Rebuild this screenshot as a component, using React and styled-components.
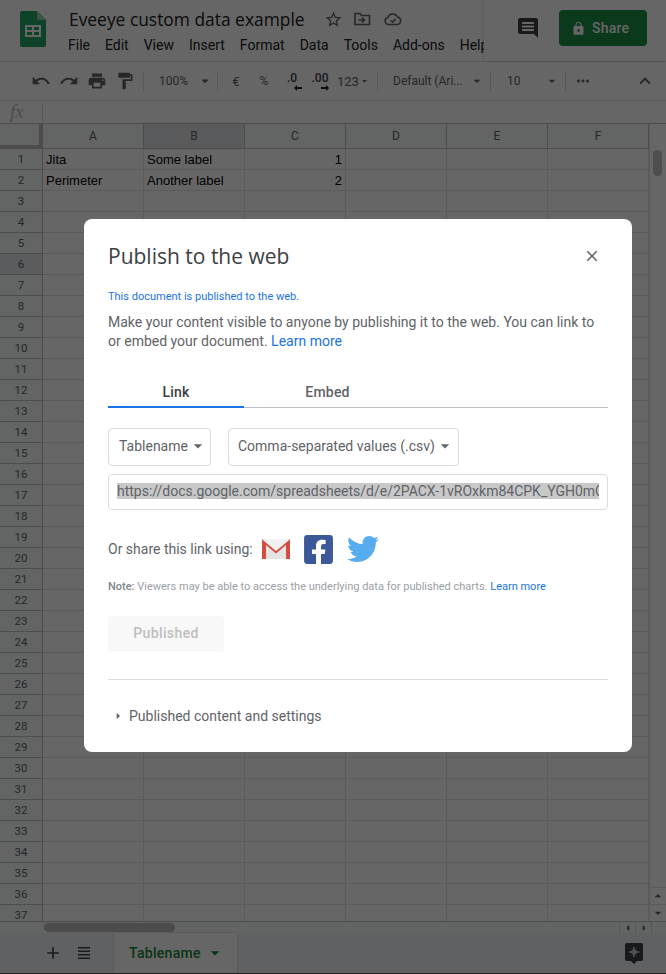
import styled, { createGlobalStyle } from 'styled-components'
import {
  MdUndo, MdRedo, MdPrint, MdFormatPaint, MdStarBorder, MdLock, MdMoreHoriz,
  MdExpandLess, MdAdd, MdClose, MdArrowDropDown, MdArrowRight,
} from 'react-icons/md'
import { FaFacebookSquare, FaTwitter } from 'react-icons/fa'

const GlobalStyle = createGlobalStyle`
  html, body { margin: 0; padding: 0; height: 100%; overflow: hidden; background: #fff; }
  * { box-sizing: border-box; }
`

const Page = styled.div`
  position: relative;
  width: 666px;
  height: 974px;
  display: flex;
  flex-direction: column;
  overflow: hidden;
  font-family: Roboto, "Liberation Sans", sans-serif;
  color: #3c4043;
`

const Header = styled.header`
  height: 62px;
  flex: none;
  display: flex;
  border-bottom: 1px solid #dadce0;
`

const Logo = styled.div`
  width: 69px;
  flex: none;
  padding: 11px 0 0 20px;
`

const TitleBlock = styled.div`
  width: 415px;
  flex: none;
  overflow: hidden;
  padding-top: 6px;
`

const DocTitleRow = styled.div`
  display: flex;
  align-items: center;
  height: 26px;
  white-space: nowrap;
`

const DocTitle = styled.div`
  font-family: "Open Sans", sans-serif;
  font-size: 17.4px;
  color: #202124;
  width: 255px;
`

const DocIcons = styled.div`
  display: flex;
  align-items: center;
  gap: 10px;
  color: #5f6368;
`

const MenuBar = styled.nav`
  display: flex;
  margin-top: 4px;
  margin-left: -1px;
  white-space: nowrap;
`

const MenuItem = styled.span`
  font-size: 14px;
  line-height: 18px;
  margin-right: 15px;
  color: #202124;
`

const HeaderRight = styled.div`
  flex: 1;
  display: flex;
  align-items: center;
  padding: 0 19px 5px 34px;
  box-shadow: -1px 0 2px rgba(0, 0, 0, 0.12);
`

const CommentWrap = styled.div`
  display: flex;
  margin-right: 21px;
`

const ShareButton = styled.div`
  width: 88px;
  height: 36px;
  background: #198f47;
  border-radius: 4px;
  color: #fff;
  font-size: 14px;
  font-weight: 500;
  display: flex;
  align-items: center;
  padding-left: 12px;
  gap: 6px;
  letter-spacing: 0.25px;
`

const Toolbar = styled.div`
  height: 39px;
  flex: none;
  display: flex;
  align-items: center;
  padding: 0 10px 0 27px;
  border-bottom: 1px solid #dadce0;
  background: #fff;
  color: #444746;
`

const ToolButton = styled.div`
  width: ${p => p.$w || 28}px;
  height: 24px;
  flex: none;
  display: flex;
  align-items: center;
  justify-content: ${p => p.$between ? 'space-between' : 'center'};
  padding: 0 ${p => p.$pr || 0}px 0 ${p => p.$pl || 0}px;
  margin-left: ${p => p.$end ? 'auto' : '0'};
  font-size: ${p => p.$size || 13}px;
  white-space: nowrap;
  color: #5f6368;
`

const ToolSep = styled.div`
  width: 1px;
  height: 20px;
  background: #dadce0;
  flex: none;
  margin: ${p => p.$m || '0 8px'};
`

const Decimal = styled.span`
  position: relative;
  font-size: 12px;
  font-weight: 500;
  color: #3c4043;
  padding-bottom: 6px;
`

const DecimalArrow = styled.svg`
  position: absolute;
  right: ${p => p.$right}px;
  bottom: 0;
`

const FormulaBar = styled.div`
  height: 23px;
  flex: none;
  display: flex;
  align-items: center;
  border-bottom: 1px solid #c0c0c0;
`

const FxLabel = styled.div`
  width: 42px;
  padding-left: 10px;
  font-family: "Liberation Serif", serif;
  font-style: italic;
  font-size: 19px;
  color: #bdbdbd;
`

const FxSep = styled.div`
  width: 1px;
  height: 17px;
  background: #dadce0;
`

const Sheet = styled.div`
  flex: 1;
  min-height: 0;
  display: flex;
`

const GridArea = styled.div`
  width: 649px;
  flex: none;
  overflow: hidden;
`

const Row = styled.div`
  display: grid;
  grid-template-columns: 43px repeat(6, 101px);
  height: ${p => p.$h || 21}px;
`

const Corner = styled.div`
  background: #f8f9fa;
  border-right: 4px solid #bdbdbd;
  border-bottom: 4px solid #bdbdbd;
`

const ColHead = styled.div`
  background: ${p => p.$active ? '#e0e3e8' : '#f8f9fa'};
  border-right: 1px solid #c0c0c0;
  border-bottom: 1px solid #c0c0c0;
  font-size: 12px;
  color: #5f6368;
  display: flex;
  align-items: center;
  justify-content: center;
`

const RowHead = styled.div`
  background: ${p => p.$active ? '#e4e7ea' : '#f8f9fa'};
  border-right: 1px solid #c0c0c0;
  border-bottom: 1px solid #c0c0c0;
  font-size: 11.500px;
  color: #5f6368;
  display: flex;
  align-items: center;
  justify-content: center;
`

const Cell = styled.div`
  border-right: 1px solid #e2e3e3;
  border-bottom: 1px solid #e2e3e3;
  font-family: "Liberation Sans", sans-serif;
  font-size: 13px;
  color: #000;
  padding: 0 3px;
  display: flex;
  align-items: center;
  justify-content: ${p => p.$num ? 'flex-end' : 'flex-start'};
  white-space: nowrap;
`

const VScroll = styled.div`
  flex: 1;
  position: relative;
  background: #fff;
  border-left: 1px solid #e2e3e3;
`

const VThumb = styled.div`
  position: absolute;
  left: 3px;
  top: 26px;
  width: 9px;
  height: 26px;
  border-radius: 5px;
  background: #c4c4c4;
`

const ScrollArrows = styled.div`
  position: absolute;
  left: 0;
  right: 0;
  bottom: 0;
  display: flex;
  flex-direction: column;
`

const ScrollBtn = styled.div`
  height: 17px;
  display: flex;
  align-items: center;
  justify-content: center;
  border-top: 1px solid #e2e3e3;
  color: #5f6368;
`

const Caret = styled(MdArrowDropDown)`
  transform: rotate(${p => p.$turn || 0}deg);
`

const TabCaret = styled(MdArrowDropDown)`
  margin-left: 4px;
`

const HScroll = styled.div`
  height: 12px;
  flex: none;
  display: flex;
  border-top: 1px solid #c0c0c0;
  background: #f8f9fa;
`

const HTrack = styled.div`
  width: 619px;
  flex: none;
  padding: 1px 0 0 44px;
`

const HThumb = styled.div`
  width: 131px;
  height: 9px;
  border-radius: 5px;
  background: #bdbdbd;
`

const HButton = styled.div`
  width: 16px;
  flex: none;
  display: flex;
  align-items: center;
  justify-content: center;
  border-left: 1px solid #dadce0;
  color: #5f6368;
`

const TabBar = styled.div`
  height: 40px;
  flex: none;
  display: flex;
  align-items: stretch;
  background: #f1f3f4;
  color: #5f6368;
`

const TabIcons = styled.div`
  width: 114px;
  flex: none;
  display: flex;
  align-items: center;
  padding-left: 43px;
  gap: 15px;
  color: #444746;
`

const SheetTab = styled.div`
  width: 123px;
  flex: none;
  display: flex;
  align-items: center;
  padding-left: 15px;
  background: #fff;
  box-shadow: 0 0 2px rgba(60, 64, 67, 0.3);
  color: #188038;
  font-size: 14px;
  font-weight: 500;
  letter-spacing: 0.3px;
`

const Explore = styled.div`
  margin-left: auto;
  display: flex;
  align-items: center;
  padding-right: 23px;
`

const BottomLine = styled.div`
  height: 1px;
  flex: none;
  background: #555;
`

const Backdrop = styled.div`
  position: absolute;
  inset: 0;
  background: rgba(0, 0, 0, 0.6);
  padding: 219px 0 0 84px;
`

const Dialog = styled.div`
  width: 548px;
  height: 533px;
  background: #fff;
  border-radius: 8px;
  padding: 24px 24px 0;
  display: flex;
  flex-direction: column;
`

const DialogHead = styled.div`
  display: flex;
  align-items: center;
  justify-content: space-between;
  height: 26px;
  padding-right: 7px;
  color: #5f6368;
`

const DialogTitle = styled.h2`
  margin: 0;
  font-family: "Open Sans", sans-serif;
  font-weight: 400;
  font-size: 21px;
  color: #3c4043;
`

const Status = styled.div`
  margin-top: 21px;
  font-size: 11px;
  line-height: 14px;
  color: #1a73e8;
`

const Intro = styled.p`
  margin: 9px 0 0;
  font-size: 14px;
  line-height: 19px;
  color: #5f6368;
`

const Link = styled.a`
  color: #1a73e8;
  font-size: inherit;
`

const Tabs = styled.div`
  margin-top: 27px;
  display: flex;
  height: 30px;
  border-bottom: 1px solid #bdc1c6;
`

const Tab = styled.div`
  width: ${p => p.$w}px;
  height: 30px;
  display: flex;
  justify-content: center;
  padding-top: 6px;
  font-size: 14px;
  font-weight: 500;
  letter-spacing: 0.2px;
  color: ${p => p.$active ? '#3c4043' : '#5f6368'};
  border-bottom: ${p => p.$active ? '2px solid #1a73e8' : '0'};
`

const Selects = styled.div`
  margin-top: 20px;
  display: flex;
  gap: 17px;
`

const Select = styled.div`
  height: 38px;
  width: ${p => p.$w}px;
  padding: 0 0 2px ${p => p.$pl}px;
  border: 1px solid #dadce0;
  border-radius: 4px;
  display: flex;
  align-items: center;
  font-size: 14px;
  color: #5f6368;
  white-space: nowrap;
`

const UrlBox = styled.div`
  margin-top: 8px;
  height: 36px;
  border: 1px solid #dadce0;
  border-radius: 4px;
  padding: 0 8px 2px;
  display: flex;
  align-items: center;
`

const UrlText = styled.div`
  width: 100%;
  overflow: hidden;
  white-space: nowrap;
  background: #c8c8c8;
  font-size: 14px;
  line-height: 16px;
  color: #5f6368;
`

const ShareRow = styled.div`
  margin-top: 22px;
  height: 34px;
  display: flex;
  align-items: center;
  font-size: 14px;
  color: #5f6368;
`

const ShareLabel = styled.span`
  margin-right: 8px;
`

const ShareIcon = styled.span`
  display: flex;
  margin-right: ${p => p.$gap}px;
  color: ${p => p.$color || 'inherit'};
`

const Note = styled.div`
  margin-top: 14px;
  font-size: 11px;
  line-height: 14px;
  color: #9aa0a6;
`

const NoteLabel = styled.b`
  color: #80868b;
  font-weight: 500;
`

const PublishedBtn = styled.div`
  margin-top: 22px;
  width: 116px;
  height: 36px;
  padding-bottom: 2px;
  background: #f8f8f8;
  border-radius: 4px;
  display: flex;
  align-items: center;
  justify-content: center;
  font-size: 14px;
  font-weight: 500;
  letter-spacing: 0.4px;
  color: #bdbdbd;
`

const Divider = styled.div`
  margin-top: 27px;
  height: 1px;
  background: #dadce0;
`

const Disclosure = styled.div`
  margin-top: 26px;
  display: flex;
  align-items: center;
  font-size: 14px;
  line-height: 20px;
  color: #5f6368;
`

const DisclosureIcon = styled.span`
  display: flex;
  width: 19px;
  margin-left: 2px;
`

const SheetsLogo = () => (
  <svg width="26" height="36" viewBox="0 0 26 36">
    <path d="M2 0h15l9 9v25a2 2 0 0 1-2 2H2a2 2 0 0 1-2-2V2a2 2 0 0 1 2-2z" fill="#23a566" />
    <path d="M17 0l9 9h-7a2 2 0 0 1-2-2z" fill="#8ed1b1" />
    <path d="M5 14h16v12H5zm2 2v3h5v-3zm7 0v3h5v-3zm-7 5v3h5v-3zm7 0v3h5v-3z" fill="#fff" fillRule="evenodd" />
  </svg>
)

const FolderMove = () => (
  <svg width="18" height="16" viewBox="0 0 18 16" fill="none" stroke="#5f6368" strokeWidth="1.6">
    <path d="M2 2.500h5l1.500 2h8v9H2z" />
    <path d="M5.500 9h6M9 6.500L11.500 9 9 11.500" />
  </svg>
)

const CloudDone = () => (
  <svg width="21" height="14" viewBox="-3 0 21 14" fill="none" stroke="#5f6368" strokeWidth="1.5">
    <path d="M4.500 12.500a3.600 3.600 0 0 1-.6-7.100A5.200 5.200 0 0 1 13.500 5a3.800 3.800 0 0 1 0 7.500z" />
    <path d="M6.500 8.500l2 1.600 3-3" />
  </svg>
)

const CommentIcon = () => (
  <svg width="20" height="20" viewBox="0 0 20 20">
    <path d="M2 0h16a2 2 0 0 1 2 2v18l-4-4H2a2 2 0 0 1-2-2V2a2 2 0 0 1 2-2zm2 4v2h12V4zm0 3.500v2h12v-2zM4 11v2h12v-2z" fill="#3c4043" fillRule="evenodd" />
  </svg>
)

const ExploreIcon = () => (
  <svg width="18" height="21" viewBox="0 0 18 21">
    <path d="M2 0h14a2 2 0 0 1 2 2v14a2 2 0 0 1-2 2h-4l-3 3-3-3H2a2 2 0 0 1-2-2V2a2 2 0 0 1 2-2z" fill="#3c4043" />
    <path d="M9 3l1.700 4.300L15 9l-4.300 1.700L9 15l-1.700-4.300L3 9l4.300-1.700z" fill="#c4c4c4" />
  </svg>
)

const GmailIcon = () => (
  <svg width="30" height="22" viewBox="0 0 30 22">
    <path d="M1 1h28v20H1z" fill="#f1f1f1" />
    <path d="M4 4l11 9 11-9v17h-22z" fill="#e4e4e4" />
    <path d="M3 3l12 10L27 3l2-2v20h-4V7L15 15.500 5 7v14H1V1z" fill="#d54c3f" />
  </svg>
)

const AllSheetsIcon = () => (
  <svg width="12" height="12" viewBox="0 0 12 12" fill="#444746">
    <path d="M0 0h12v1.500H0zM0 3.500h12V5H0zM0 7h12v1.500H0zM0 10.500h12V12H0z" />
  </svg>
)

const ArrowLeft = () => (
  <DecimalArrow $right={-5} width="8" height="6" viewBox="0 0 8 6" fill="#202124">
    <path d="M0 3l3-3v2h5v2H3v2z" />
  </DecimalArrow>
)

const ArrowRight = () => (
  <DecimalArrow $right={-1} width="8" height="6" viewBox="0 0 8 6" fill="#202124">
    <path d="M8 3L5 0v2H0v2h5v2z" />
  </DecimalArrow>
)

const rowNumbers = Array.from({ length: 37 }, (_, i) => i + 1)
const cellData = {
  1: ['Jita', 'Some label', '1'],
  2: ['Perimeter', 'Another label', '2'],
}
const columns = ['A', 'B', 'C', 'D', 'E', 'F']
const menus = ['File', 'Edit', 'View', 'Insert', 'Format', 'Data', 'Tools', 'Add-ons', 'Help']

const App = () => {
  return (
    <Page>
      <GlobalStyle />
      <Header>
        <Logo><SheetsLogo /></Logo>
        <TitleBlock>
          <DocTitleRow>
            <DocTitle>Eveeye custom data example</DocTitle>
            <DocIcons>
              <MdStarBorder size={19} />
              <FolderMove />
              <CloudDone />
            </DocIcons>
          </DocTitleRow>
          <MenuBar>
            {menus.map(m => <MenuItem key={m}>{m}</MenuItem>)}
          </MenuBar>
        </TitleBlock>
        <HeaderRight>
          <CommentWrap><CommentIcon /></CommentWrap>
          <ShareButton><MdLock size={15} />Share</ShareButton>
        </HeaderRight>
      </Header>

      <Toolbar>
        <ToolButton><MdUndo size={20} /></ToolButton>
        <ToolButton><MdRedo size={20} /></ToolButton>
        <ToolButton><MdPrint size={20} /></ToolButton>
        <ToolButton><MdFormatPaint size={20} /></ToolButton>
        <ToolSep $m="0 14px 0 4px" />
        <ToolButton $w={56} $between $pl={1} $size={12}>100%<MdArrowDropDown size={18} /></ToolButton>
        <ToolSep $m="0 4px 0 3px" />
        <ToolButton>€</ToolButton>
        <ToolButton $size={12}>%</ToolButton>
        <ToolButton><Decimal>.0<ArrowLeft /></Decimal></ToolButton>
        <ToolButton><Decimal>.00<ArrowRight /></Decimal></ToolButton>
        <ToolButton $w={36} $pl={3} $between>123<MdArrowDropDown size={14} /></ToolButton>
        <ToolSep $m="0 5px 0 7px" />
        <ToolButton $w={107} $between $pl={10} $pr={5} $size={12}>Default (Ari...<MdArrowDropDown size={16} /></ToolButton>
        <ToolSep $m="0" />
        <ToolButton $w={74} $between $pl={16} $pr={5} $size={12}>10<MdArrowDropDown size={16} /></ToolButton>
        <ToolSep $m="0 7px 0 0" />
        <ToolButton $w={20}><MdMoreHoriz size={18} /></ToolButton>
        <ToolButton $w={22} $end><MdExpandLess size={22} /></ToolButton>
      </Toolbar>

      <FormulaBar>
        <FxLabel>fx</FxLabel>
        <FxSep />
      </FormulaBar>

      <Sheet>
        <GridArea>
          <Row $h={25}>
            <Corner />
            {columns.map(c => <ColHead key={c} $active={c === 'B'}>{c}</ColHead>)}
          </Row>
          {rowNumbers.map(n => {
            const data = cellData[n] || []
            return (
              <Row key={n}>
                <RowHead $active={n === 6}>{n}</RowHead>
                {columns.map((c, i) => (
                  <Cell key={c} $num={i === 2}>{data[i]}</Cell>
                ))}
              </Row>
            )
          })}
        </GridArea>
        <VScroll>
          <VThumb />
          <ScrollArrows>
            <ScrollBtn><Caret size={16} $turn={180} /></ScrollBtn>
            <ScrollBtn><Caret size={16} /></ScrollBtn>
          </ScrollArrows>
        </VScroll>
      </Sheet>

      <HScroll>
        <HTrack><HThumb /></HTrack>
        <HButton><Caret size={14} $turn={90} /></HButton>
        <HButton><MdArrowRight size={14} /></HButton>
        <HButton />
      </HScroll>

      <TabBar>
        <TabIcons>
          <MdAdd size={20} />
          <AllSheetsIcon />
        </TabIcons>
        <SheetTab>
          Tablename
          <TabCaret size={20} />
        </SheetTab>
        <Explore><ExploreIcon /></Explore>
      </TabBar>
      <BottomLine />

      <Backdrop>
        <Dialog>
          <DialogHead>
            <DialogTitle>Publish to the web</DialogTitle>
            <MdClose size={18} />
          </DialogHead>
          <Status>This document is published to the web.</Status>
          <Intro>
            Make your content visible to anyone by publishing it to the web. You can link to
            or embed your document. <Link>Learn more</Link>
          </Intro>
          <Tabs>
            <Tab $w={136} $active>Link</Tab>
            <Tab $w={167}>Embed</Tab>
          </Tabs>
          <Selects>
            <Select $w={103} $pl={10}>Tablename<MdArrowDropDown size={20} /></Select>
            <Select $w={231} $pl={9}>Comma-separated values (.csv)<MdArrowDropDown size={20} /></Select>
          </Selects>
          <UrlBox>
            <UrlText>https://docs.google.com/spreadsheets/d/e/2PACX-1vROxkm84CPK_YGH0mC8pubhtml</UrlText>
          </UrlBox>
          <ShareRow>
            <ShareLabel>Or share this link using:</ShareLabel>
            <ShareIcon $gap={11}><GmailIcon /></ShareIcon>
            <ShareIcon $gap={12} $color="#3b5998"><FaFacebookSquare size={33} /></ShareIcon>
            <ShareIcon $gap={0} $color="#55acee"><FaTwitter size={32} /></ShareIcon>
          </ShareRow>
          <Note>
            <NoteLabel>Note:</NoteLabel> Viewers may be able to access the underlying data for published charts. <Link>Learn more</Link>
          </Note>
          <PublishedBtn>Published</PublishedBtn>
          <Divider />
          <Disclosure>
            <DisclosureIcon><MdArrowRight size={16} /></DisclosureIcon>
            Published content and settings
          </Disclosure>
        </Dialog>
      </Backdrop>
    </Page>
  )
}

export default App
